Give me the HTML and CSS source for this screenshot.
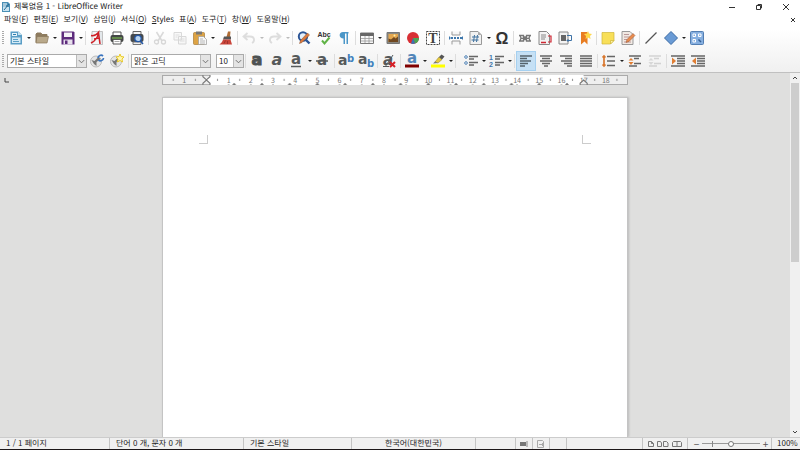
FILE: index.html
```html
<!DOCTYPE html>
<html lang="ko">
<head>
    <meta charset="UTF-8">
    <meta name="viewport" content="width=device-width, initial-scale=1.0">
    <title>제목없음 1 - LibreOffice Writer</title>
    <link rel="stylesheet" href="styles.css">
</head>
<body>
    <header class="app-header">
        <div class="titlebar">
            <svg class="app-icon" viewBox="0 0 10 10"><path d="M1 0h6l2 2v8H1z" fill="#4b8fb5"/><path d="M2 2h4M2 4h3" stroke="#fff"/><path d="M2 5h6v4H2z" fill="#c8e2f0"/><path d="M3 8l5-6" stroke="#2b6c93"/></svg>
            <h1 class="title">제목없음 1 - LibreOffice Writer</h1>
            <div class="window-buttons">
                <button class="window-button" aria-label="최소화"><svg viewBox="0 0 8 8"><path d="M1 4.500h6"/></svg></button>
                <button class="window-button" aria-label="이전 크기로"><svg viewBox="0 0 8 8"><path d="M1.500 2.500h4v4h-4zM3 2.500v-1h3.500v3.500h-1"/></svg></button>
                <button class="window-button" aria-label="닫기"><svg viewBox="0 0 8 8"><path d="M1 1l6 6M7 1l-6 6"/></svg></button>
            </div>
        </div>

        <nav class="menubar">
            <a href="#">파일(<u>F</u>)</a>
            <a href="#">편집(<u>E</u>)</a>
            <a href="#">보기(<u>V</u>)</a>
            <a href="#">삽입(<u>I</u>)</a>
            <a href="#">서식(<u>O</u>)</a>
            <a href="#"><u>S</u>tyles</a>
            <a href="#">표(<u>A</u>)</a>
            <a href="#">도구(<u>T</u>)</a>
            <a href="#">창(<u>W</u>)</a>
            <a href="#">도움말(<u>H</u>)</a>
            <button class="close-doc" aria-label="문서 닫기"><svg viewBox="0 0 6 6"><path d="M1 1l4 4M5 1l-4 4"/></svg></button>
        </nav>

        <!-- 표준 도구 모음 -->
        <div class="toolbar">
            <span class="grip"></span>
            <button class="tool" aria-label="새로 만들기"><svg viewBox="0 0 16 16"><path d="M2.500 1.500h8l3.500 3.500v9.500H2.500z" fill="#5b9ec6"/><path d="M4 3h5v3H4z" fill="#e8f4fa"/><path d="M5 4.500h3" stroke="#2f7fae"/><path d="M4 7.500h8.500V13H4z" fill="#d5eaf5"/><path d="M5 9.500h5M5 11.500h6" stroke="#5b9fc4"/><path d="M10 1.500V5h4z" fill="#c4e0ee"/></svg></button>
            <button class="caret" aria-label="새로 만들기 목록"></button>
            <button class="tool" aria-label="열기"><svg viewBox="0 0 16 16"><path d="M2 12.500V4l1-1h4l1 1.500h5V7" fill="#8d7b5e" stroke="#8d7b5e"/><path d="M2 13l1-6.500h11.500L13 13z" fill="#b9a98b" stroke="#89775a" stroke-width=".7"/></svg></button>
            <button class="caret" aria-label="열기 목록"></button>
            <button class="tool" aria-label="저장"><svg viewBox="0 0 16 16"><path d="M1.500 1.500h12l1 1v12h-13z" fill="#5c2a7c"/><path d="M4 2.500h8V7H4z" fill="#f4f1f6"/><path d="M3.500 9.500h9v5h-9z" fill="#e7e0ec"/><path d="M5 10.500h2.500v3.500H5z" fill="#5c2a7c"/></svg></button>
            <button class="caret" aria-label="저장 목록"></button>
            <span class="sep"></span>
            <button class="tool" aria-label="PDF로 내보내기"><svg viewBox="0 0 16 16"><path d="M3 1.500h10.500v13H3z" fill="#f5f5f5" stroke="#a9a9a9" stroke-width=".7"/><path d="M8 2h5v11.500h-3z" fill="#e3e8eb"/><path d="M2 13C6 11 9 7 9.500 2.500C7 5.500 4.500 6 2 5.500M9.500 2.500L11 14M5 9l5-1" fill="none" stroke="#cf1f26" stroke-width="1.500"/></svg></button>
            <button class="tool" aria-label="인쇄"><svg viewBox="0 0 16 16"><path d="M4 2h8v4H4z" fill="#fff" stroke="#555"/><rect x="1.500" y="5" width="13" height="7" rx="2" fill="#444746"/><path d="M3 8h10" stroke="#83d052"/><path d="M4 9.500h8v4.500H4z" fill="#fff" stroke="#555"/><path d="M5.500 11.500h5" stroke="#aaa"/></svg></button>
            <button class="tool" aria-label="인쇄 미리 보기"><svg viewBox="0 0 16 16"><path d="M4 1.500h8V5H4z" fill="#f2f2f2" stroke="#666"/><rect x="1.500" y="4" width="13" height="8" rx="2" fill="#45494c"/><path d="M4 12h8v2.500H4z" fill="#eee" stroke="#777"/><circle cx="9" cy="8.500" r="3.200" fill="#b9d5f1" stroke="#2457a5" stroke-width="1.300"/><path d="M11.500 11l2.500 3" stroke="#2457a5" stroke-width="1.500"/></svg></button>
            <span class="sep"></span>
            <button class="tool faded" aria-label="잘라내기"><svg viewBox="0 0 16 16"><path d="M4.500 2l5.500 9M11.500 2L6 11" stroke="#888" stroke-width="1.500"/><circle cx="4.500" cy="12" r="2" fill="none" stroke="#888" stroke-width="1.300"/><circle cx="11.500" cy="12" r="2" fill="none" stroke="#888" stroke-width="1.300"/></svg></button>
            <button class="tool faded" aria-label="복사"><svg viewBox="0 0 16 16"><path d="M2 2.500h7.500V10H2zM6.500 6.500H14V14H6.500z" fill="#eee" stroke="#888"/><path d="M3.500 5h4M3.500 7h2M8 9h4.500M8 11h4.500" stroke="#999"/></svg></button>
            <button class="tool" aria-label="붙여넣기"><svg viewBox="0 0 16 16"><rect x="1.500" y="2.500" width="11" height="12" rx="1" fill="#dda344" stroke="#a87b37" stroke-width=".7"/><path d="M4 1.500h6v3H4z" fill="#777"/><path d="M6.500 6.500h5l3 3v5h-8z" fill="#f7f7f7" stroke="#999" stroke-width=".7"/><path d="M8 9h3M8 11h5M8 13h5" stroke="#aaa" stroke-width=".8"/></svg></button>
            <button class="caret" aria-label="붙여넣기 목록"></button>
            <button class="tool" aria-label="서식 복제"><svg viewBox="0 0 16 16"><path d="M10 1.500h2.500L12 7H8.500z" fill="#b06c35"/><path d="M6 6.500h7v3H5z" fill="#565656"/><path d="M5 9.500h7.500l1.500 5H1.500C3.500 13 4.500 11.500 5 9.500z" fill="#c9453a"/><path d="M6 13.500l1.500-3M9.500 14v-3" stroke="#8e2a27" stroke-width=".7"/></svg></button>
            <span class="sep"></span>
            <button class="tool faded" aria-label="실행 취소"><svg viewBox="0 0 16 16"><path d="M6.500 3L2.500 6.500 6.500 10M3 6.500h6c5 0 5 5 2 6.500" fill="none" stroke="#999" stroke-width="1.800"/></svg></button>
            <button class="caret faded" aria-label="실행 취소 목록"></button>
            <button class="tool faded" aria-label="다시 실행"><svg viewBox="0 0 16 16"><path d="M9.500 3l4 3.500-4 3.500M13 6.500H7c-5 0-5 5-2 6.500" fill="none" stroke="#999" stroke-width="1.800"/></svg></button>
            <button class="caret faded" aria-label="다시 실행 목록"></button>
            <span class="sep"></span>
            <button class="tool" aria-label="찾기 및 바꾸기"><svg viewBox="0 0 16 16"><circle cx="7" cy="6.500" r="4.200" fill="#e5eff9" stroke="#2d5697" stroke-width="2"/><path d="M10 10l3.500 3.500" stroke="#2d5697" stroke-width="2.400"/><path d="M3.500 13.500l1-3L11.500 3l2 2-7.500 7.500z" fill="#dc793d" stroke="#86502e" stroke-width=".5"/></svg></button>
            <button class="tool" aria-label="맞춤법 검사"><svg viewBox="0 0 16 16"><text class="sans" x="8" y="7" font-size="7" font-weight="bold" text-anchor="middle" fill="#333">Abc</text><path d="M6 10.500l2.500 3 5-6" fill="none" stroke="#60b346" stroke-width="2"/></svg></button>
            <button class="tool" aria-label="서식 표시"><svg viewBox="0 0 16 16"><path d="M12.500 2H7C2.500 2 2.500 8.500 7.500 8.500V14h1.500V3.500h1.500V14H12V3.500h.5z" fill="#4c97c8"/></svg></button>
            <span class="sep"></span>
            <button class="tool" aria-label="표"><svg viewBox="0 0 16 16"><path d="M1.500 3h13v10.500h-13z" fill="#f7f7f7" stroke="#777"/><path d="M1.500 3h13v3h-13z" fill="#666"/><path d="M2 8.500h12M2 11h12M6 6v7M10 6v7" stroke="#999" stroke-width=".8"/></svg></button>
            <button class="caret" aria-label="표 목록"></button>
            <button class="tool" aria-label="이미지"><svg viewBox="0 0 16 16"><path d="M2 2.500h12.500v11H2z" fill="#8a8880" stroke="#777"/><path d="M3.500 4h9.500v8H3.500z" fill="#e3a64e"/><path d="M3.500 12V8.500l2.500 1L9 7l1.500 1.500 2.500-2V12z" fill="#704820"/><circle cx="9.500" cy="5.500" r="1" fill="#fff0a8"/></svg></button>
            <button class="tool" aria-label="차트"><svg viewBox="0 0 16 16"><circle cx="8" cy="8" r="6" fill="#d82f34"/><path d="M8 8h6a6 6 0 0 1-4 5.500z" fill="#4aa555"/><path d="M8 8l2 5.500A6 6 0 0 1 6 13.500z" fill="#3973b5"/></svg></button>
            <button class="tool" aria-label="텍스트 상자"><svg viewBox="0 0 16 16"><path d="M1.500 1.500h13v13h-13z" fill="#fff" stroke="#444" stroke-dasharray="2 1"/><text class="serif" x="8" y="13" font-size="14" font-weight="bold" text-anchor="middle" fill="#444">T</text></svg></button>
            <span class="sep"></span>
            <button class="tool" aria-label="페이지 나누기"><svg viewBox="0 0 16 16"><path d="M4 1.500V5h8V1.500M4 14.500V11h8v3.500" fill="#f6f6f6" stroke="#999"/><path d="M1 6l2 2-2 2zM15 6l-2 2 2 2z" fill="#3f78ad"/><path d="M3 8h11" stroke="#3f78ad" stroke-width="2" stroke-dasharray="2 1"/></svg></button>
            <button class="tool" aria-label="필드"><svg viewBox="0 0 16 16"><path d="M2 1.500h8l3.500 3.500v9.500H2z" fill="#f1f1f1" stroke="#999"/><path d="M10 1.500V5h3.500z" fill="#aaa"/><path d="M6.500 5l-1 7M9.500 5l-1 7M4 7h7M3.500 10h7" stroke="#41739f"/></svg></button>
            <button class="caret" aria-label="필드 목록"></button>
            <button class="tool" aria-label="특수 문자"><svg viewBox="0 0 16 16"><text class="sans" x="8" y="14" font-size="16" font-weight="bold" text-anchor="middle" fill="#333">Ω</text></svg></button>
            <span class="sep"></span>
            <button class="tool" aria-label="하이퍼링크"><svg viewBox="0 0 16 16"><path d="M2 5.500h4.500v1.500h3v-1.500H14M2 11h4.500V9.500h3v1.500H14M3 5.500L4 8l-1 3M13 5.500L12 8l1 3M4 8.300h8" fill="none" stroke="#777" stroke-width="1.300"/></svg></button>
            <button class="tool" aria-label="각주"><svg viewBox="0 0 16 16"><path d="M2 1.500h7.500l3 3v10H2z" fill="#f3f3f3" stroke="#888"/><path d="M4 5h5M4 7h5M4 9h4" stroke="#888"/><path d="M4 12.500h5" stroke="#cd2632" stroke-width="1.500"/><path d="M11 6h3v6h-3" fill="none" stroke="#cd2632" stroke-width="1.200"/></svg></button>
            <button class="tool" aria-label="미주"><svg viewBox="0 0 16 16"><path d="M2 2h9v12H2z" fill="#f3f3f3" stroke="#888"/><path d="M4 5h5v6H4z" fill="#666"/><path d="M10 5.500h4.500v5H10M11.500 9L10 10.500l1.500 1.500" fill="none" stroke="#3d72a6"/></svg></button>
            <button class="tool" aria-label="책갈피"><svg viewBox="0 0 16 16"><path d="M4 2h6.500v12.500l-3-3-3.500 3z" fill="#e87d22"/><path d="M11 1l1 2.500 3 .5-2 2 .5 3L11 7.500 8.500 9 9 6 7 4l3-.5z" fill="#ffd84a"/></svg></button>
            <span class="sep"></span>
            <button class="tool" aria-label="메모"><svg viewBox="0 0 16 16"><path d="M2 2.500h12v8L10.500 14H2z" fill="#f8df58" stroke="#cfb63b" stroke-width=".7"/><path d="M14 10.500h-3.500V14z" fill="#fff4a8" stroke="#cfb63b" stroke-width=".7"/></svg></button>
            <button class="tool" aria-label="변경 내용 기록"><svg viewBox="0 0 16 16"><path d="M2 1.500h8l3 3v10H2z" fill="#f1e9e3" stroke="#999"/><path d="M4 4.500h5M4 7h6M4 9.500h3M4 12h7" stroke="#b99"/><path d="M6 12.500l1-3 6-6 2 2-6 6z" fill="#e98b4e" stroke="#925333" stroke-width=".5"/></svg></button>
            <span class="sep"></span>
            <button class="tool" aria-label="선"><svg viewBox="0 0 16 16"><path d="M2.500 13.500l11-11" stroke="#555" stroke-width="1.200"/></svg></button>
            <button class="tool" aria-label="도형"><svg viewBox="0 0 16 16"><path d="M8 1.500L14.500 8 8 14.500 1.500 8z" fill="#6a9bd5" stroke="#3b6ba5"/></svg></button>
            <button class="caret" aria-label="도형 목록"></button>
            <button class="tool" aria-label="그리기 기능 표시"><svg viewBox="0 0 16 16"><rect x="1.500" y="1.500" width="13" height="13" rx="1" fill="#86afe0" stroke="#537eb2"/><path d="M4 4h2.500v2.500H4zM9.500 4H12v2.500H9.500zM4 9.500h2.500V12H4z" fill="none" stroke="#fff"/><path d="M9.500 9.500L12 12" stroke="#335f94" stroke-width="1.500"/></svg></button>
        </div>

        <!-- 서식 도구 모음 -->
        <div class="toolbar">
            <span class="grip"></span>
            <span class="combo">
                <select aria-label="단락 스타일"><option>기본 스타일</option></select>
                <svg class="combo-arrow" viewBox="0 0 10 12"><path d="M2 5l3 3 3-3"/></svg>
            </span>
            <button class="tool" aria-label="스타일 업데이트"><svg viewBox="0 0 16 16"><circle cx="7" cy="8.500" r="5.500" fill="#e4e4e4" stroke="#bbb"/><path d="M2.500 7l3 1 4-4 2 2-4 3v4L5 11z" fill="#777"/><path d="M9 5a3 3 0 0 1 5-2M14.500 5a3 3 0 0 1-5 2" fill="none" stroke="#3a74be" stroke-width="1.700"/></svg></button>
            <button class="tool" aria-label="새 스타일"><svg viewBox="0 0 16 16"><circle cx="7" cy="8.500" r="5.500" fill="#e4e4e4" stroke="#bbb"/><path d="M2.500 7l3 1 4-4 2 2-4 3v4L5 11z" fill="#777"/><path d="M11 1l1 2.500 3 .5-2 2 .5 3L11 7.500 8.500 9 9 6 7 4l3-.5z" fill="#fff7b0" stroke="#e8c928"/></svg></button>
            <span class="sep"></span>
            <span class="combo">
                <select aria-label="글꼴 이름"><option>맑은 고딕</option></select>
                <svg class="combo-arrow" viewBox="0 0 10 12"><path d="M2 5l3 3 3-3"/></svg>
            </span>
            <span class="combo combo-size">
                <select aria-label="글꼴 크기"><option>10</option></select>
                <svg class="combo-arrow" viewBox="0 0 10 12"><path d="M2 5l3 3 3-3"/></svg>
            </span>
            <span class="sep"></span>
            <button class="tool" aria-label="굵게"><svg viewBox="0 0 16 16"><text x="8" y="12" font-size="16" font-weight="bold" text-anchor="middle" fill="#4d5152" stroke="#4d5152">a</text></svg></button>
            <button class="tool" aria-label="기울임꼴"><svg viewBox="0 0 16 16"><text x="8" y="12" font-size="16" font-weight="bold" font-style="italic" text-anchor="middle" fill="#55595a">a</text></svg></button>
            <button class="tool" aria-label="밑줄"><svg viewBox="0 0 16 16"><text x="7" y="11" font-size="15" font-weight="bold" text-anchor="middle" fill="#55595a">a</text><path d="M2 13.500h10" stroke="#55595a" stroke-width="1.500"/></svg></button>
            <button class="caret" aria-label="밑줄 목록"></button>
            <button class="tool" aria-label="취소선"><svg viewBox="0 0 16 16"><text x="7" y="12" font-size="15" font-weight="bold" text-anchor="middle" fill="#55595a">a</text><path d="M1 8h12" stroke="#55595a" stroke-width="1.500"/></svg></button>
            <span class="sep"></span>
            <button class="tool" aria-label="위 첨자"><svg viewBox="0 0 16 16"><text x="0" y="12" font-size="14" font-weight="bold" fill="#55595a">a</text><text x="9" y="9" font-size="10" font-weight="bold" fill="#3f7fbd">b</text></svg></button>
            <button class="tool" aria-label="아래 첨자"><svg viewBox="0 0 16 16"><text x="0" y="11" font-size="14" font-weight="bold" fill="#55595a">a</text><text x="9" y="14" font-size="10" font-weight="bold" fill="#3f7fbd">b</text></svg></button>
            <span class="sep"></span>
            <button class="tool" aria-label="서식 지우기"><svg viewBox="0 0 16 16"><text x="7" y="12" font-size="15" font-weight="bold" font-style="italic" text-anchor="middle" fill="#55595a">a</text><path d="M4 14L12 2M2 13.500h6" stroke="#55595a"/><path d="M9 9l5 5M14 9l-5 5" stroke="#d61f26" stroke-width="2"/></svg></button>
            <span class="sep"></span>
            <button class="tool" aria-label="글꼴 색"><svg viewBox="0 0 16 16"><text x="8" y="10" font-size="15" font-weight="bold" text-anchor="middle" fill="#5185b9">a</text><path d="M1 11.500h14v3H1z" fill="#800000"/></svg></button>
            <button class="caret" aria-label="글꼴 색 목록"></button>
            <button class="tool" aria-label="강조 색"><svg viewBox="0 0 16 16"><path d="M5 9l4-5 3 2.500L8 10z" fill="#e5c93e" stroke="#9c8839" stroke-width=".6"/><path d="M9 4l2.500-2.500 3 2L12 6.500z" fill="#555"/><path d="M3 10.500L5 8.500l3 1.500z" fill="#777"/><path d="M1 11.500h14v3H1z" fill="#ff0"/></svg></button>
            <button class="caret" aria-label="강조 색 목록"></button>
            <span class="sep"></span>
            <div class="list-tools">
                <button class="tool" aria-label="글머리 기호"><svg viewBox="0 0 16 16"><circle cx="3" cy="4" r="1.300" fill="#fff" stroke="#4d80b4"/><circle cx="3" cy="10" r="1.300" fill="#fff" stroke="#4d80b4"/><path d="M6 3.500h9M6 6h5M6 9.500h9M6 12h5" stroke="#666" stroke-width="1.700"/></svg></button>
                <button class="caret" aria-label="글머리 기호 목록"></button>
                <button class="tool" aria-label="번호 매기기"><svg viewBox="0 0 16 16"><text class="sans" x="0" y="7" font-size="7" font-weight="bold" fill="#3f75aa">1</text><text class="sans" x="0" y="14" font-size="7" font-weight="bold" fill="#3f75aa">2</text><path d="M6 3.500h9M6 6h5M6 9.500h9M6 12h5" stroke="#666" stroke-width="1.700"/></svg></button>
                <button class="caret" aria-label="번호 매기기 목록"></button>
            </div>
            <span class="sep"></span>
            <button class="tool active" aria-label="왼쪽 맞춤" aria-pressed="true"><svg viewBox="0 0 16 16"><path d="M2 3h12M2 5.500h7M2 8h11M2 10.500h8M2 13h5" stroke="#56636c" stroke-width="1.700"/></svg></button>
            <button class="tool" aria-label="가운데 맞춤"><svg viewBox="0 0 16 16"><path d="M2 3h12M4 5.500h8M2 8h12M4 10.500h8M6 13h4" stroke="#666" stroke-width="1.700"/></svg></button>
            <button class="tool" aria-label="오른쪽 맞춤"><svg viewBox="0 0 16 16"><path d="M2 3h12M7 5.500h7M3 8h11M6 10.500h8M9 13h5" stroke="#666" stroke-width="1.700"/></svg></button>
            <button class="tool" aria-label="양쪽 맞춤"><svg viewBox="0 0 16 16"><path d="M2 3h12M2 5.500h12M2 8h12M2 10.500h12M2 13h12" stroke="#666" stroke-width="1.700"/></svg></button>
            <span class="sep"></span>
            <button class="tool" aria-label="줄 간격"><svg viewBox="0 0 16 16"><path d="M3 4v8M1.500 4.500L3 3l1.500 1.500M1.500 11.500L3 13l1.500-1.500" fill="none" stroke="#d9782f" stroke-width="1.700"/><path d="M6 3.500h8M6 8h8M6 12.500h8" stroke="#666" stroke-width="1.700"/></svg></button>
            <button class="caret" aria-label="줄 간격 목록"></button>
            <button class="tool" aria-label="단락 간격 늘리기"><svg viewBox="0 0 16 16"><path d="M2 3h12M7 5.500h5M7 10.500h7M2 13h8" stroke="#666" stroke-width="1.700"/><path d="M4 5l2.500 2.500h-5zM4 12L1.500 9h5z" fill="#e07e34"/></svg></button>
            <button class="tool faded" aria-label="단락 간격 줄이기"><svg viewBox="0 0 16 16"><path d="M2 3h12M7 5.500h5M7 10.500h7M2 13h8" stroke="#888" stroke-width="1.700"/><path d="M4 5l2.500 2.500h-5zM4 12L1.500 9h5z" fill="#999"/></svg></button>
            <span class="sep"></span>
            <button class="tool" aria-label="들여쓰기"><svg viewBox="0 0 16 16"><path d="M1 3h14M7 5.500h8M7 8h8M7 10.500h8M1 13h14" stroke="#666" stroke-width="1.700"/><path d="M2 4.500L6 8l-4 3.500z" fill="#e07e34"/></svg></button>
            <button class="tool" aria-label="내어쓰기"><svg viewBox="0 0 16 16"><path d="M1 3h14M7 5.500h8M7 8h8M7 10.500h8M1 13h14" stroke="#666" stroke-width="1.700"/><path d="M6 4.500L2 8l4 3.500z" fill="#e07e34"/></svg></button>
        </div>
    </header>

    <main class="workspace">
        <div class="canvas">
            <div class="ruler-row">
                <svg class="tab-kind" viewBox="0 0 5 5"><path d="M1 0v4h4"/></svg>
                <!-- 눈금자: 1cm = 100 단위 -->
                <svg class="ruler" viewBox="0 0 2100 45">
                    <defs>
                        <pattern id="ticks" width="100" height="45" patternUnits="userSpaceOnUse">
                            <path d="M50 17v10" stroke="#999" stroke-width="5"/>
                            <path d="M0 40v5M100 40v5" stroke="#999" stroke-width="5"/>
                        </pattern>
                        <pattern id="tabs" x="200" width="125" height="45" patternUnits="userSpaceOnUse">
                            <path d="M116 45h18L125 35zM-9 45h18L0 35z" fill="#777"/>
                        </pattern>
                    </defs>
                    <path d="M0 0h2100v45H0z" fill="#efefef"/>
                    <path d="M200 0h1700v45H200z" fill="#fff"/>
                    <path d="M0 0h2100v45H0z" fill="url(#ticks)"/>
                    <path d="M220 0h1660v45H220z" fill="url(#tabs)"/>
                    <path d="M200 2H2v41h198M1900 2h198v41h-198" fill="none" stroke="#aaa" stroke-width="5"/>
                    <g class="ruler-numbers">
                        <text x="100" y="34">1</text>
                        <text x="300" y="34">1</text>
                        <text x="400" y="34">2</text>
                        <text x="500" y="34">3</text>
                        <text x="600" y="34">4</text>
                        <text x="700" y="34">5</text>
                        <text x="800" y="34">6</text>
                        <text x="900" y="34">7</text>
                        <text x="1000" y="34">8</text>
                        <text x="1100" y="34">9</text>
                        <text x="1200" y="34">10</text>
                        <text x="1300" y="34">11</text>
                        <text x="1400" y="34">12</text>
                        <text x="1500" y="34">13</text>
                        <text x="1600" y="34">14</text>
                        <text x="1700" y="34">15</text>
                        <text x="1800" y="34">16</text>
                        <text x="1900" y="34">17</text>
                        <text x="2000" y="34">18</text>
                    </g>
                    <path d="M184 0h32v8l-16 14-16-14zM184 45h32v-8l-16-14-16 14zM1884 45h32v-8l-16-14-16 14z" fill="#eee" stroke="#777" stroke-width="5"/>
                </svg>
            </div>
            <div class="page" contenteditable="true" aria-label="문서">
                <span class="corner corner-left"></span>
                <span class="corner corner-right"></span>
            </div>
        </div>
        <div class="scrollbar">
            <button class="scroll-button" aria-label="위로"><svg viewBox="0 0 6 6"><path d="M1 4l2-2 2 2"/></svg></button>
            <div class="scroll-track"><div class="scroll-thumb"></div></div>
            <button class="scroll-button" aria-label="아래로"><svg viewBox="0 0 6 6"><path d="M1 2l2 2 2-2"/></svg></button>
        </div>
    </main>

    <footer class="statusbar">
        <span class="cell">1 / 1 페이지</span>
        <span class="cell">단어 0 개, 문자 0 개</span>
        <span class="cell">기본 스타일</span>
        <span class="cell cell-center">한국어(대한민국)</span>
        <span class="cell"></span>
        <span class="cell cell-icon"><svg width="8" height="8" viewBox="0 0 8 8"><path d="M0 2h6v4H0z" fill="#777"/><path d="M7 1v6" stroke="#888"/></svg></span>
        <span class="cell cell-icon"><svg width="8" height="8" viewBox="0 0 8 8"><path d="M.5 .5h5l1 1v6h-6zM2 4.500h4M5 3l1.500 1.500L5 6" fill="none" stroke="#aaa"/></svg></span>
        <span class="cell"></span>
        <span class="cell"></span>
        <div class="cell cell-icon view-modes">
            <button aria-label="한 페이지"><svg width="6" height="8" viewBox="0 0 6 8"><path d="M.5 1.500h3l2 2v3h-5zM3.500 1.500v2h2"/></svg></button>
            <button aria-label="여러 페이지"><svg width="12" height="8" viewBox="0 0 12 8"><path d="M.5 1.500h3l1 1.500v3.500h-4zM6.500 1.500h3l1.500 1.500v3.500H6.500z"/></svg></button>
            <button aria-label="책 보기"><svg width="10" height="8" viewBox="0 0 10 8"><path d="M.5 6.500v-4l1-1h3.500v5zM5 1.500h3.500l1 1v4H5"/></svg></button>
        </div>
        <div class="cell zoom">
            <button class="zoom-button" aria-label="축소">−</button>
            <input class="zoom-slider" type="range" min="0" max="100" value="50" aria-label="확대/축소">
            <button class="zoom-button" aria-label="확대">+</button>
        </div>
        <span class="cell zoom-value">100%</span>
    </footer>
</body>
</html>
```

FILE: styles.css
```css
* {
    box-sizing: border-box;
}
body {
    display: flex;
    flex-direction: column;
    height: 100vh;
    margin: 0;
    border-bottom: 1px solid #1c1618;
    overflow: hidden;
    background: #f0f0f0;
    color: #222;
    font: 8px/12px "Noto Sans CJK KR", sans-serif;
    text-rendering: geometricPrecision;
}
button {
    display: flex;
    align-items: center;
    justify-content: center;
    padding: 0;
    border: 0;
    background: none;
    color: inherit;
    font: inherit;
}
svg {
    display: block;
    flex: none;
}

/* 상단 영역 */
.app-header {
    flex: none;
    border-bottom: 1px solid #c0c0c0;
    background: linear-gradient(#fff 40%, #f0f0f0);
}
.titlebar {
    display: flex;
    align-items: center;
    height: 13px;
    padding: 0 1px;
}
.app-icon {
    width: 10px;
    height: 10px;
}
.title {
    margin: 0 0 0 3px;
    font-size: 8px;
    font-weight: normal;
}
.window-buttons {
    display: flex;
    margin-left: auto;
}
.window-button {
    width: 27px;
    height: 12px;
}
.window-button svg {
    width: 8px;
    height: 8px;
    fill: none;
    stroke: #333;
}
.menubar {
    display: flex;
    align-items: center;
    gap: 5px;
    height: 14px;
    padding: 0 4px;
}
.menubar a {
    color: inherit;
    text-decoration: none;
    white-space: nowrap;
}
.close-doc {
    margin-left: auto;
}
.close-doc svg {
    width: 6px;
    height: 6px;
    stroke: #333;
    stroke-width: 1;
}

/* 도구 모음 */
.toolbar {
    display: flex;
    align-items: center;
    height: 22px;
}
.toolbar:last-child {
    height: 23px;
}
.grip {
    width: 2px;
    height: 14px;
    margin: 0 2px;
    background: repeating-linear-gradient(#aaa 0 1px, transparent 1px 2px);
}
.tool {
    flex: none;
    width: 20px;
    height: 20px;
}
.tool svg {
    width: 16px;
    height: 16px;
    fill: none;
    font-family: "DejaVu Sans", sans-serif;
    overflow: visible;
}
.tool .sans {
    font-family: "Liberation Sans", sans-serif;
}
.tool .serif {
    font-family: "Liberation Serif", serif;
}
.tool.active {
    border: 1px solid #a5d0f0;
    background: #c5e0f5;
}
.faded {
    opacity: 0.3;
}
.caret {
    flex: none;
    width: 6px;
    height: 20px;
}
.caret::before {
    content: "";
    border: 2px solid transparent;
    border-top-color: #222;
    border-bottom: 0;
}
.sep {
    flex: none;
    width: 1px;
    height: 14px;
    margin: 0 1px;
    background: #ddd;
}
.list-tools {
    display: flex;
    padding-left: 4px;
}
.combo {
    position: relative;
    flex: none;
    width: 80px;
    height: 14px;
    margin: 0 0 0 1px;
}
.combo-size {
    width: 28px;
    margin-left: 5px;
}
.combo select {
    width: 100%;
    height: 100%;
    padding: 0 11px 0 2px;
    border: 1px solid #aaa;
    border-radius: 0;
    background: #fff;
    color: inherit;
    font: inherit;
    line-height: 12px;
    appearance: none;
}
.combo-arrow {
    position: absolute;
    top: 1px;
    right: 1px;
    width: 10px;
    height: 12px;
    border-left: 1px solid #bbb;
    background: #e4e4e4;
    fill: none;
    stroke: #666;
    pointer-events: none;
}

/* 문서 영역 */
.workspace {
    display: flex;
    flex: 1;
    min-height: 0;
    background: #dfdfde;
}
.canvas {
    display: flex;
    flex: 1;
    flex-direction: column;
    overflow: hidden;
}
.ruler-row {
    display: grid;
    grid-template-columns: 1fr 59% 1fr;
    align-items: center;
    height: 14px;
}
.tab-kind {
    width: 5px;
    height: 5px;
    margin-left: 4px;
    fill: none;
    stroke: #444;
}
.ruler {
    width: 100%;
}
.ruler-numbers {
    fill: #777;
    font-size: 32px;
    text-anchor: middle;
}
.page {
    display: flex;
    flex: 1;
    justify-content: space-between;
    width: 59%;
    margin: 10px auto 0;
    padding: 37px 36px 0;
    border: 1px solid #c4c4c4;
    border-bottom: 0;
    background: #fff;
    box-shadow: 1px 0 2px #bbb;
}
.corner {
    width: 9px;
    height: 9px;
    border-bottom: 1px solid #ccc;
}
.corner-left {
    border-right: 1px solid #ccc;
}
.corner-right {
    border-left: 1px solid #ccc;
}
.scrollbar {
    display: flex;
    flex-direction: column;
    width: 10px;
    padding: 0 1px;
    background: #f0f0f0;
}
.scroll-button {
    height: 10px;
}
.scroll-button svg {
    width: 6px;
    height: 6px;
    fill: none;
    stroke: #444;
    stroke-width: 1;
}
.scroll-track {
    flex: 1;
}
.scroll-thumb {
    height: 52%;
    background: #cdcdcd;
}

/* 상태 표시줄 */
.statusbar {
    display: grid;
    flex: none;
    grid-template-columns: 110fr 134fr 108fr 124fr 40fr 17px 17px 17px 76fr 45px 84px 28px;
    height: 12px;
    border-top: 1px solid #ccc;
    background: #f0f0f0;
    line-height: 11px;
}
.cell {
    display: flex;
    align-items: center;
    min-width: 0;
    padding-left: 6px;
    border-right: 1px solid #c4c4c4;
    white-space: nowrap;
}
.cell:last-child {
    border-right: 0;
}
.cell-center,
.cell-icon {
    justify-content: center;
    padding-left: 0;
}
.view-modes {
    gap: 3px;
}
.view-modes svg {
    fill: none;
    stroke: #777;
}
.zoom {
    gap: 2px;
    padding-left: 5px;
}
.zoom-button {
    width: 7px;
    height: 10px;
    color: #555;
    font-size: 10px;
}
.zoom-slider {
    width: 58px;
    height: 10px;
    margin: 0;
    background:
        linear-gradient(#888, #888) 10px 50% / 1px 6px no-repeat,
        linear-gradient(#999, #999) 0 50% / 100% 1px no-repeat;
    appearance: none;
}
.zoom-slider::-webkit-slider-thumb {
    width: 6px;
    height: 6px;
    border: 1px solid #777;
    border-radius: 50%;
    background: #fff;
    appearance: none;
}
.zoom-value {
    padding-left: 5px;
}
```
